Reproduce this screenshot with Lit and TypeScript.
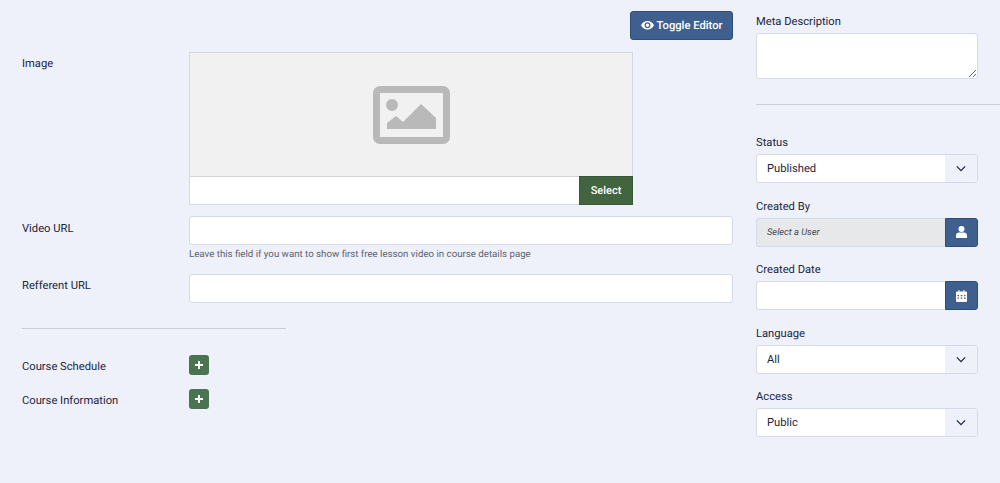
import { LitElement, html, css, svg } from "lit";
import { customElement } from "lit/decorators.js";

const chevron = html`<svg width="10" height="7" viewBox="0 0 12 8"><path d="M1 1.500l5 5 5-5" fill="none" stroke="#1c2540" stroke-width="1.500"/></svg>`;
const eye = svg`<path fill="#fff" d="M6.500 0C3.600 0 1.200 1.700 0 4.300c1.200 2.600 3.600 4.200 6.500 4.200S11.800 6.900 13 4.300C11.800 1.700 9.400 0 6.500 0zm0 7.100a2.900 2.900 0 1 1 0-5.800 2.900 2.900 0 0 1 0 5.800zm0-4.600a1.700 1.700 0 1 0 0 3.400 1.700 1.700 0 0 0 0-3.400z"/>`;

@customElement("app-root")
export class AppRoot extends LitElement {
  static styles = css`
    :host {
      display: block;
      height: 483px;
      overflow: hidden;
      background: #eef1fa;
      color: #1c2540;
      font-family: Roboto, "Liberation Sans", sans-serif;
      font-size: 11.2px;
      text-rendering: geometricPrecision;
    }
    * { box-sizing: border-box; }
    .page {
      display: grid;
      grid-template-columns: 711px 244px;
      column-gap: 23px;
      padding-left: 22px;
    }
    .main { padding-top: 11px; }
    .toolbar { display: flex; justify-content: flex-end; margin-bottom: 12px; }
    .toggle {
      display: flex;
      align-items: center;
      gap: 3px;
      height: 29px;
      width: 103px;
      justify-content: center;
      background: #3f5f8f;
      border: 1px solid #2f4d7c;
      border-radius: 3px;
      color: #fff;
      font-size: 11.2px;
      font-weight: 500;
    }
    .row { display: grid; grid-template-columns: 167px 544px; }
    .row > label { line-height: 15px; }
    .image-row { margin-bottom: 11px; }
    .image-row label { padding-top: 4px; }
    .image-box { width: 444px; }
    .preview {
      height: 124px;
      background: #f1f1f1;
      border: 1px solid #d5d8e0;
      border-bottom: none;
      display: flex;
      align-items: center;
      justify-content: center;
    }
    .picker { display: flex; height: 29px; background: #fff; border: 1px solid #d5dae8; border-top-color: #cfd3dc; }
    .picker .grow { flex: 1; }
    .select-btn {
      width: 54px;
      margin: -1px -1px -1px 0;
      background: #42643f;
      border: 1px solid #38573a;
      color: #fff;
      font-weight: 500;
      font-size: 11px;
      display: flex;
      align-items: center;
      justify-content: center;
    }
    .input {
      height: 29px;
      background: #fff;
      border: 1px solid #d5dae8;
      border-radius: 3px;
    }
    .video label { padding-top: 5px; }
    .help { font-size: 9.7px; color: #5b6170; margin-top: 3px; line-height: 13px; }
    .video { margin-bottom: 13px; }
    .ref label { padding-top: 4px; }
    .divider { height: 1px; background: #c9cdd8; }
    .main .divider { width: 264px; margin: 25px 0 26px; }
    .sub { align-items: center; height: 20px; margin-bottom: 14px; }
    .sub label { padding-top: 2px; }
    .plus {
      width: 20px;
      height: 20px;
      border-radius: 3px;
      background: #4a7350;
      display: flex;
      align-items: center;
      justify-content: center;
    }
    .side { padding-top: 14px; }
    .field { display: flex; flex-direction: column; width: 221.5px; margin-bottom: 15.5px; }
    .field label { line-height: 15px; margin-bottom: 4px; }
    textarea {
      display: block;
      width: 100%;
      height: 46px;
      border: 1px solid #d5dae8;
      border-radius: 3px;
      background: #fff;
      margin: 0;
      padding: 0;
    }
    .side .divider { margin: 25px 0 30px; width: 244px; }
    .meta { margin-bottom: 0; }
    .select {
      display: flex;
      height: 29px;
      background: #fff;
      border: 1px solid #d5dae8;
      border-radius: 3px;
      overflow: hidden;
    }
    .select span { flex: 1; padding-left: 10px; line-height: 27px; color: #1c2540; }
    .select i {
      width: 31.5px;
      padding-left: 1px;
      display: flex;
      align-items: center;
      justify-content: center;
      background: #eef1fa;
    }
    .group { display: flex; height: 29px; }
    .group .text {
      flex: 1;
      background: #fff;
      border: 1px solid #d5dae8;
      border-right: none;
      border-radius: 3px 0 0 3px;
      padding-left: 10px;
      line-height: 27px;
    }
    .group .text.off { background: #e7e8ea; font-size: 9.3px; font-style: italic; color: #3f4556; }
    .group button {
      width: 33px;
      padding: 0;
      background: #3f5f8f;
      border: 1px solid #2f4d7c;
      border-radius: 0 3px 3px 0;
      display: flex;
      align-items: center;
      justify-content: center;
    }
  `;

  renderSelect(label: string, value: string) {
    return html`<div class="field">
      <label>${label}</label>
      <div class="select"><span>${value}</span><i>${chevron}</i></div>
    </div>`;
  }

  render() {
    const plus = html`<div class="plus"><svg width="10" height="10" viewBox="0 0 10 10"><path d="M5 1v8M1 5h8" stroke="#fff" stroke-width="2"/></svg></div>`;
    return html`<div class="page">
      <div class="main">
        <div class="toolbar">
          <div class="toggle"><svg width="13" height="9" viewBox="0 0 13 9">${eye}</svg>Toggle Editor</div>
        </div>
        <div class="row image-row">
          <label>Image</label>
          <div class="image-box">
            <div class="preview">
              <svg width="77" height="58" viewBox="0 0 77 58">
                <path fill="#b9b9b9" fill-rule="evenodd" d="M7 0h63a7 7 0 0 1 7 7v44a7 7 0 0 1-7 7H7a7 7 0 0 1-7-7V7a7 7 0 0 1 7-7zm0 7v44h63V7z"/>
                <circle cx="19" cy="19" r="6" fill="#b9b9b9"/>
                <path fill="#b9b9b9" d="M14 43v-6l9-7 7 6 18-18 15 14v11z"/>
              </svg>
            </div>
            <div class="picker"><div class="grow"></div><div class="select-btn">Select</div></div>
          </div>
        </div>
        <div class="row video">
          <label>Video URL</label>
          <div>
            <div class="input"></div>
            <div class="help">Leave this field if you want to show first free lesson video in course details page</div>
          </div>
        </div>
        <div class="row ref">
          <label>Refferent URL</label>
          <div class="input"></div>
        </div>
        <div class="divider"></div>
        <div class="row sub">
          <label>Course Schedule</label>
          ${plus}
        </div>
        <div class="row sub">
          <label>Course Information</label>
          ${plus}
        </div>
      </div>
      <div class="side">
        <div class="field meta">
          <label>Meta Description</label>
          <textarea></textarea>
        </div>
        <div class="divider"></div>
        ${this.renderSelect("Status", "Published")}
        <div class="field">
          <label>Created By</label>
          <div class="group">
            <div class="text off">Select a User</div>
            <button><svg width="11" height="12" viewBox="0 0 11 12"><circle cx="5.500" cy="3" r="3" fill="#fff"/><path fill="#fff" d="M0 12V9.500C0 7.800 1.300 6.600 3 6.600h5c1.700 0 3 1.200 3 2.900V12z"/></svg></button>
          </div>
        </div>
        <div class="field">
          <label>Created Date</label>
          <div class="group">
            <div class="text"></div>
            <button><svg width="11" height="12" viewBox="0 0 11 12"><path fill="#fff" fill-rule="evenodd" d="M2.500 0h1v1.500h4V0h1v1.500H10A1 1 0 0 1 11 2.500V11a1 1 0 0 1-1 1H1a1 1 0 0 1-1-1V2.500a1 1 0 0 1 1-1h1.500zM1.500 5v1.300h1.500V5zm3.200 0v1.300h1.600V5zm3.300 0v1.300h1.500V5zM1.500 7.500v1.300h1.500V7.500zm3.200 0v1.300h1.600V7.500zm3.300 0v1.300h1.500V7.500z"/></svg></button>
          </div>
        </div>
        ${this.renderSelect("Language", "All")}
        ${this.renderSelect("Access", "Public")}
      </div>
    </div>`;
  }
}
